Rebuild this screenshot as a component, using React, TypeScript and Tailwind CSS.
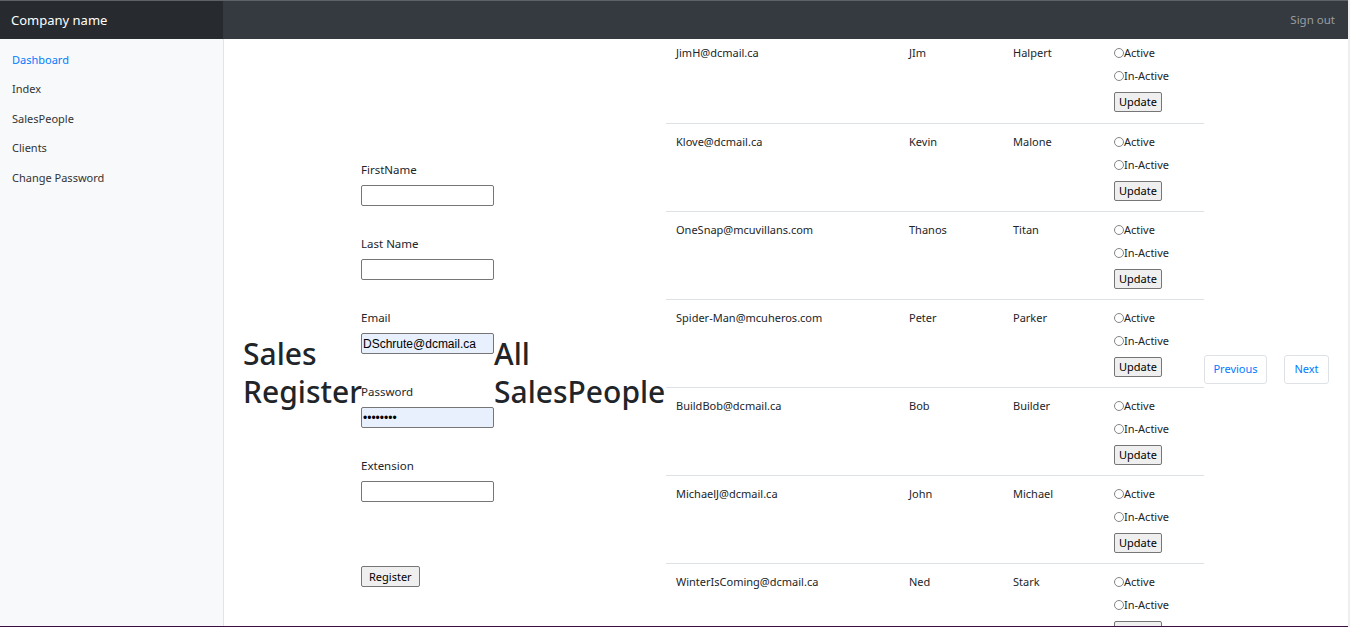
import React from "react";

interface SalesPerson {
  email: string;
  first: string;
  last: string;
}

const people: SalesPerson[] = [
  { email: "JimH@dcmail.ca", first: "JIm", last: "Halpert" },
  { email: "Klove@dcmail.ca", first: "Kevin", last: "Malone" },
  { email: "OneSnap@mcuvillans.com", first: "Thanos", last: "Titan" },
  { email: "Spider-Man@mcuheros.com", first: "Peter", last: "Parker" },
  { email: "BuildBob@dcmail.ca", first: "Bob", last: "Builder" },
  { email: "MichaelJ@dcmail.ca", first: "John", last: "Michael" },
  { email: "WinterIsComing@dcmail.ca", first: "Ned", last: "Stark" },
];

const navItems = ["Dashboard", "Index", "SalesPeople", "Clients", "Change Password"];

const Radio = ({ label }: { label: string }) => (
  <div className="flex h-[18px] items-center">
    <span className="inline-block h-[10px] w-[10px] rounded-full border border-[#858585] bg-white" />
    <span>{label}</span>
  </div>
);

const Field = ({
  label,
  type = "text",
  value,
  filled,
}: {
  label: string;
  type?: string;
  value?: string;
  filled?: boolean;
}) => (
  <div className="mb-[29px]">
    <label className="block text-[11.5px] leading-[18px]">{label}</label>
    <input
      type={type}
      defaultValue={value}
      className={
        "mt-[6px] block h-[21px] w-[133px] rounded-[2px] border border-[#767676] px-[1px] font-['Liberation_Sans',sans-serif] text-[12px] text-black outline-none " +
        (filled ? "bg-[#e8f0fe]" : "bg-white")
      }
    />
  </div>
);

const Row = ({ p, first }: { p: SalesPerson; first: boolean }) => (
  <tr className={first ? "" : "border-t border-[#dee2e6]"}>
    <td className={"pl-[10px] align-top " + (first ? "pt-[5px]" : "pt-[9px]")}>
      <div className="leading-[18px]">{p.email}</div>
    </td>
    <td className={"pl-[10px] align-top " + (first ? "pt-[5px]" : "pt-[9px]")}>
      <div className="leading-[18px]">{p.first}</div>
    </td>
    <td className={"pl-[10px] align-top " + (first ? "pt-[5px]" : "pt-[9px]")}>
      <div className="leading-[18px]">{p.last}</div>
    </td>
    <td className={"pl-[10px] align-top " + (first ? "pt-[5px] pb-[11px]" : "pt-[9px] pb-[10px]")}>
      <Radio label="Active" />
      <div className="mt-[5px]">
        <Radio label="In-Active" />
      </div>
      <button className="mt-[7px] block h-[20px] rounded-[2px] border border-[#767676] bg-[#efefef] px-[4px] text-[11px] leading-[18px] text-black">
        Update
      </button>
    </td>
  </tr>
);

export default function App() {
  return (
    <div className="flex h-[627px] w-[1350px] overflow-hidden bg-white font-['Noto_Sans',sans-serif] text-[#212529]">
      <div className="flex w-[1348px] flex-col">
        <header className="flex h-[39px] shrink-0 border-t border-[#5e6266] bg-[#343a40]">
          <div className="flex w-[223px] items-center bg-[#272b30] pl-[11px] pt-[2px] text-[13px] text-white">
            Company name
          </div>
          <div className="flex flex-1 items-center justify-end pr-[13px] text-[11.5px] text-[#9a9da1]">
            Sign out
          </div>
        </header>

        <div className="flex min-h-0 flex-1">
          <aside className="w-[224px] shrink-0 border-r border-[#e3e4e5] bg-[#f8f9fa] pt-[6px]">
            {navItems.map((item, i) => (
              <a
                key={item}
                className={
                  "block px-[12px] py-[6.5px] text-[11px] leading-[16.5px] " +
                  (i === 0 ? "text-[#007bff]" : "text-[#333]")
                }
              >
                {item}
              </a>
            ))}
          </aside>

          <main className="min-w-0 flex-1 overflow-hidden pl-[19px]">
            <div className="flex h-[668px] items-center">
              <h1 className="w-[118px] shrink-0 text-[30px] font-medium leading-[38px]">
                Sales Register
              </h1>

              <form className="w-[133px] shrink-0 pt-[2px]">
                <Field label="FirstName" />
                <Field label="Last Name" />
                <Field label="Email" value="DSchrute@dcmail.ca" filled />
                <Field label="Password" type="password" value="dwight12" filled />
                <div className="mb-[64px]">
                  <label className="block text-[11.5px] leading-[18px]">Extension</label>
                  <input className="mt-[6px] block h-[21px] w-[133px] rounded-[2px] border border-[#767676] bg-white" />
                </div>
                <button
                  type="button"
                  className="block h-[21px] rounded-[2px] border border-[#767676] bg-[#efefef] px-[7px] text-[11px] leading-[18px] text-black"
                >
                  Register
                </button>
              </form>

              <h1 className="w-[172px] shrink-0 text-[30px] font-medium leading-[38px]">
                All SalesPeople
              </h1>

              <table className="w-[538px] shrink-0 table-fixed self-start text-[11px]">
                <colgroup>
                  <col className="w-[233px]" />
                  <col className="w-[104px]" />
                  <col className="w-[101px]" />
                  <col className="w-[100px]" />
                </colgroup>
                <tbody>
                  {people.map((p, i) => (
                    <Row key={p.email} p={p} first={i === 0} />
                  ))}
                </tbody>
              </table>

              <nav className="mb-[8px] flex shrink-0 gap-[17px]">
                <button className="h-[29px] w-[63px] rounded-[3px] border border-[#dee2e6] text-[11px] text-[#007bff]">
                  Previous
                </button>
                <button className="h-[29px] w-[45px] rounded-[3px] border border-[#dee2e6] text-[11px] text-[#007bff]">
                  Next
                </button>
              </nav>
            </div>
          </main>
        </div>
        <div className="h-px shrink-0 bg-[#3b0d42]" />
      </div>
      <div className="w-[2px] shrink-0 bg-[#efefef]" />
    </div>
  );
}
